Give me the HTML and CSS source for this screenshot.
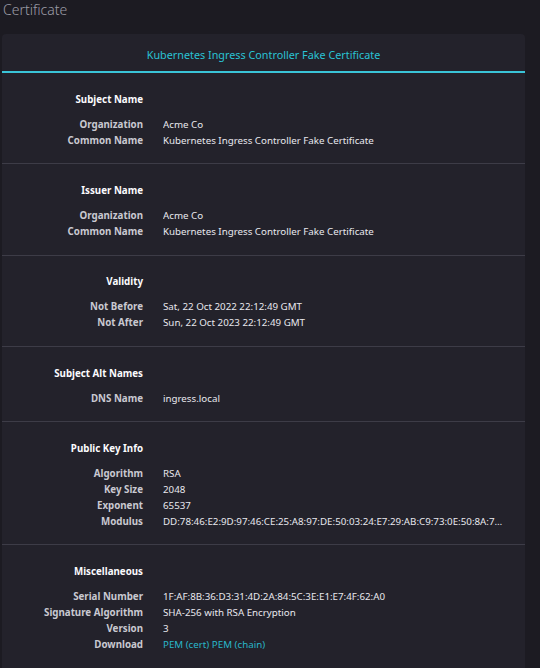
FILE: index.html
```html
<!DOCTYPE html>
<html lang="en">
<head>
<meta charset="utf-8">
<title>Certificate</title>
<link rel="stylesheet" href="styles.css">
</head>
<body>
<div class="page">
  <h1 class="title">Certificate</h1>
  <div class="card">
    <div class="tabbar"><span class="tab">Kubernetes Ingress Controller Fake Certificate</span></div>
    <section class="sec">
      <div class="row head"><span class="lbl">Subject Name</span></div>
      <div class="row"><span class="lbl">Organization</span><span class="val">Acme Co</span></div>
      <div class="row"><span class="lbl">Common Name</span><span class="val">Kubernetes Ingress Controller Fake Certificate</span></div>
    </section>
    <section class="sec">
      <div class="row head"><span class="lbl">Issuer Name</span></div>
      <div class="row"><span class="lbl">Organization</span><span class="val">Acme Co</span></div>
      <div class="row"><span class="lbl">Common Name</span><span class="val">Kubernetes Ingress Controller Fake Certificate</span></div>
    </section>
    <section class="sec">
      <div class="row head"><span class="lbl">Validity</span></div>
      <div class="row"><span class="lbl">Not Before</span><span class="val">Sat, 22 Oct 2022 22:12:49 GMT</span></div>
      <div class="row"><span class="lbl">Not After</span><span class="val">Sun, 22 Oct 2023 22:12:49 GMT</span></div>
    </section>
    <section class="sec">
      <div class="row head"><span class="lbl">Subject Alt Names</span></div>
      <div class="row"><span class="lbl">DNS Name</span><span class="val">ingress.local</span></div>
    </section>
    <section class="sec">
      <div class="row head"><span class="lbl">Public Key Info</span></div>
      <div class="row"><span class="lbl">Algorithm</span><span class="val">RSA</span></div>
      <div class="row"><span class="lbl">Key Size</span><span class="val">2048</span></div>
      <div class="row"><span class="lbl">Exponent</span><span class="val">65537</span></div>
      <div class="row"><span class="lbl">Modulus</span><span class="val">DD:78:46:E2:9D:97:46:CE:25:A8:97:DE:50:03:24:E7:29:AB:C9:73:0E:50:8A:7…</span></div>
    </section>
    <section class="sec">
      <div class="row head"><span class="lbl">Miscellaneous</span></div>
      <div class="row"><span class="lbl">Serial Number</span><span class="val">1F:AF:8B:36:D3:31:4D:2A:84:5C:3E:E1:E7:4F:62:A0</span></div>
      <div class="row"><span class="lbl">Signature Algorithm</span><span class="val">SHA-256 with RSA Encryption</span></div>
      <div class="row"><span class="lbl">Version</span><span class="val">3</span></div>
      <div class="row"><span class="lbl">Download</span><span class="val"><a class="link" href="#">PEM (cert)</a> <a class="link" href="#">PEM (chain)</a></span></div>
    </section>
  </div>
</div>
</body>
</html>
```

FILE: styles.css
```css
html, body {
  margin: 0;
  padding: 0;
  background: #1c1b22;
  height: 100%;
  overflow: hidden;
}
body {
  font-family: "Noto Sans", "Open Sans", sans-serif;
  font-size: 9.75px;
  color: #fbfbfe;
}
.page {
  width: 523px;
  padding-left: 2px;
}
.title {
  margin: 0;
  padding: 0 0 0 1px;
  height: 34px;
  font-family: "Noto Sans", "Open Sans", sans-serif;
  font-weight: 300;
  font-size: 14px;
  line-height: 20px;
  color: #9d9da7;
}
.card {
  background: #23222b;
  border-radius: 4px 4px 0 0;
}
.tabbar {
  height: 37px;
  border-bottom: 2px solid #3ac4d7;
  display: flex;
  align-items: center;
  justify-content: center;
}
.tab {
  color: #2ac3d4;
  font-size: 10.8px;
  padding-top: 4px;
}
.sec {
  padding: 18.75px 0 14.5px;
  border-bottom: 1px solid #3d3c47;
}
.row {
  display: flex;
  line-height: 16px;
  gap: 20px;
}
.row.head {
  margin-bottom: 9px;
}
.lbl {
  width: 141px;
  flex: none;
  text-align: right;
  font-weight: bold;
  color: #c9c9d1;
}
.head .lbl {
  color: #fbfbfe;
}
.val {
  flex: none;
  width: 345px;
  white-space: nowrap;
  overflow: hidden;
  color: #e8e8ee;
}
.link {
  color: #29b6c9;
  text-decoration: none;
}
```
